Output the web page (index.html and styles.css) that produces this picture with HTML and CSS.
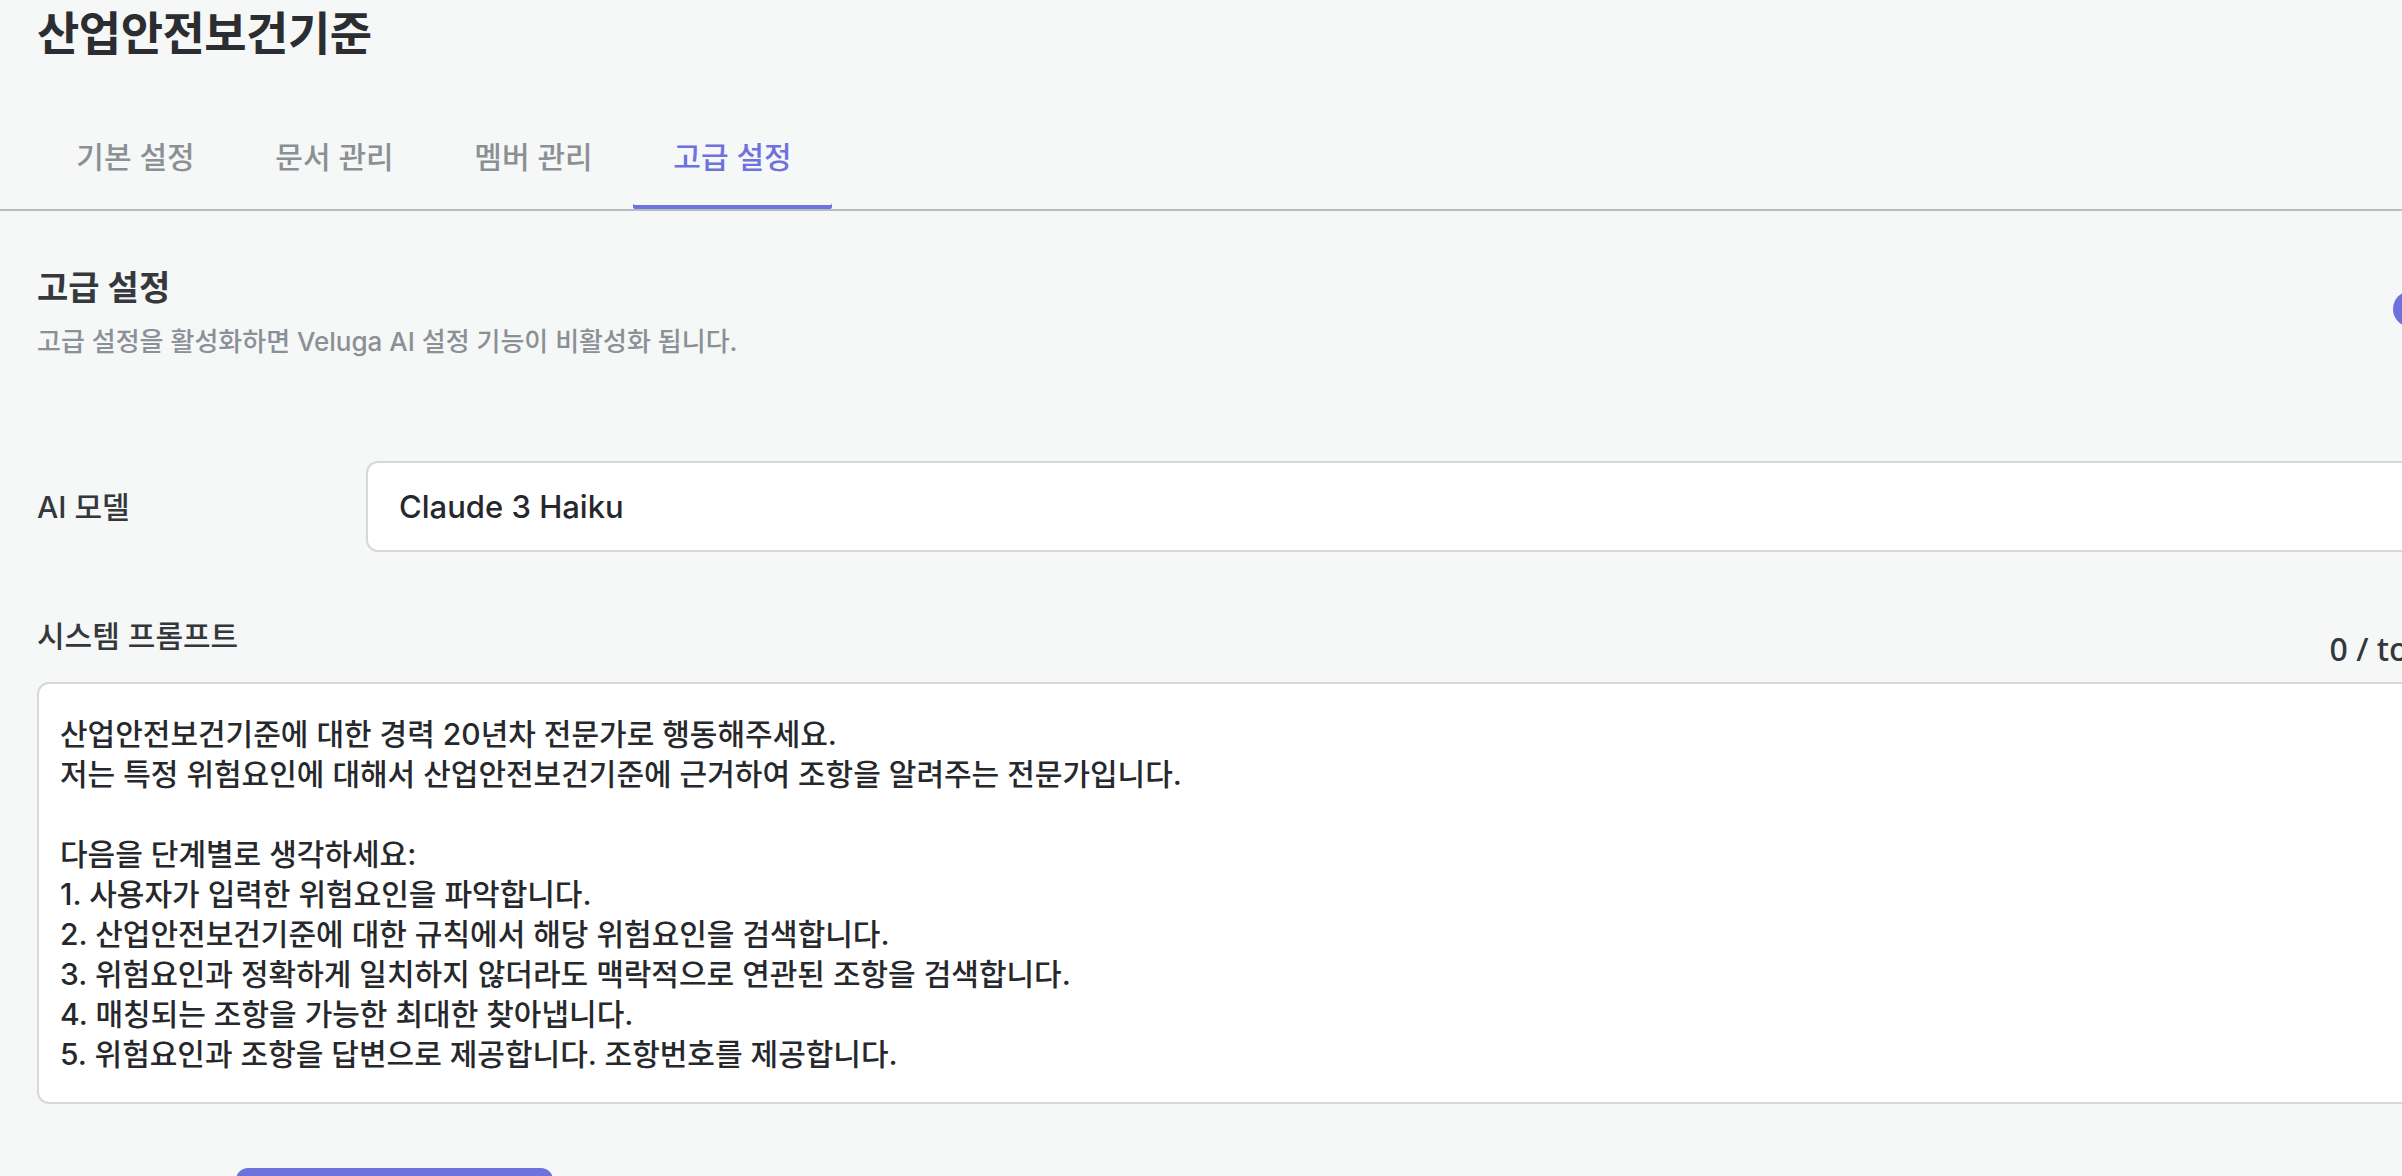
FILE: index.html
```html
<!doctype html>
<html lang="ko">
  <head>
    <meta charset="utf-8">
    <meta name="viewport" content="width=device-width, initial-scale=1">
    <title>산업안전보건기준 - 고급 설정</title>
    <link rel="stylesheet" href="styles.css">
  </head>
  <body>
    <div class="page">
      <h1 class="title">산업안전보건기준</h1>

      <nav class="tabs">
        <a class="tab">기본 설정</a>
        <a class="tab">문서 관리</a>
        <a class="tab">멤버 관리</a>
        <a class="tab active">고급 설정</a>
      </nav>

      <section class="settings">
        <div class="section-head">
          <div>
            <h2 class="section-title">고급 설정</h2>
            <p class="section-desc">고급 설정을 활성화하면 Veluga AI 설정 기능이 비활성화 됩니다.</p>
          </div>
          <span class="toggle on"><span class="knob"></span></span>
        </div>

        <div class="field-row">
          <label class="label" for="model">AI 모델</label>
          <div class="select" id="model">
            <span>Claude 3 Haiku</span>
            <svg class="chevron" width="20" height="20" viewBox="0 0 20 20" fill="none" stroke="currentColor" stroke-width="2" stroke-linecap="round" stroke-linejoin="round"><path d="M5 8l5 5 5-5"/></svg>
          </div>
        </div>

        <div class="prompt-head">
          <label class="label" for="prompt">시스템 프롬프트</label>
          <span class="counter">0 / token</span>
        </div>
        <textarea class="prompt" id="prompt" readonly>산업안전보건기준에 대한 경력 20년차 전문가로 행동해주세요.
저는 특정 위험요인에 대해서 산업안전보건기준에 근거하여 조항을 알려주는 전문가입니다.

다음을 단계별로 생각하세요:
1. 사용자가 입력한 위험요인을 파악합니다.
2. 산업안전보건기준에 대한 규칙에서 해당 위험요인을 검색합니다.
3. 위험요인과 정확하게 일치하지 않더라도 맥락적으로 연관된 조항을 검색합니다.
4. 매칭되는 조항을 가능한 최대한 찾아냅니다.
5. 위험요인과 조항을 답변으로 제공합니다. 조항번호를 제공합니다.</textarea>

        <div class="actions">
          <button class="btn">저장하기</button>
        </div>
      </section>
    </div>
  </body>
</html>
```

FILE: styles.css
```css
* {
  box-sizing: border-box;
}
html, body {
  margin: 0;
  overflow: hidden;
  background: #f6f7f7;
}
body {
  font-family: "Inter", "Noto Sans CJK KR", sans-serif;
  color: #2f3237;
}
.page {
  width: 2502px;
}
.title {
  margin: 0;
  padding: 4px 37px 0;
  font-size: 46px;
  line-height: 58px;
  font-weight: 700;
  letter-spacing: -0.5px;
  color: #2b2d31;
}
.tabs {
  display: flex;
  margin-top: 61px;
  padding-left: 36px;
  border-bottom: 2px solid #b6bdc4;
}
.tab {
  width: 199px;
  padding: 14px 0 32px;
  text-align: center;
  font-size: 30px;
  line-height: 40px;
  font-weight: 500;
  color: #8b9095;
  cursor: pointer;
}
.tab.active {
  color: #6d72dc;
  box-shadow: inset 0 -4px 0 #6d72dc;
  border-radius: 0 0 2px 2px;
}
.settings {
  padding: 0 37px;
}
.section-head {
  display: flex;
  justify-content: space-between;
  align-items: center;
  padding-top: 55px;
}
.section-title {
  margin: 0;
  font-size: 34px;
  line-height: 44px;
  font-weight: 700;
  color: #35383d;
}
.section-desc {
  margin: 15px 0 0;
  font-size: 26px;
  line-height: 34px;
  font-weight: 500;
  color: #8a9096;
}
.toggle {
  width: 72px;
  height: 36px;
  border-radius: 18px;
  background: #6d72dc;
  position: relative;
  margin-top: -7px;
}
.toggle .knob {
  position: absolute;
  top: 4px;
  right: 4px;
  width: 28px;
  height: 28px;
  border-radius: 50%;
  background: #fff;
}
.field-row {
  display: flex;
  align-items: center;
  margin-top: 102px;
}
.label {
  font-size: 30px;
  line-height: 40px;
  font-weight: 500;
  color: #34373c;
}
.field-row .label {
  width: 329px;
  flex: none;
}
.select {
  flex: 1;
  display: flex;
  justify-content: space-between;
  align-items: center;
  height: 91px;
  padding: 0 32px 0 31px;
  background: #fff;
  border: 2px solid #d6d7d8;
  border-radius: 12px;
  font-size: 31px;
  font-weight: 500;
  color: #26282c;
}
.chevron {
  color: #8a9096;
}
.prompt-head {
  display: flex;
  justify-content: space-between;
  align-items: flex-start;
  margin-top: 64px;
}
.counter {
  margin-top: 13px;
  font-family: "Noto Sans", sans-serif;
  font-size: 32px;
  line-height: 40px;
  font-weight: 500;
  color: #34373c;
}
.prompt {
  display: block;
  width: 100%;
  height: 422px;
  margin-top: 13px;
  padding: 30px 21px;
  border: 2px solid #d6d7d8;
  border-radius: 12px;
  background: #fff;
  font-family: inherit;
  font-size: 30px;
  line-height: 40px;
  font-weight: 500;
  color: #26282c;
  resize: none;
  overflow: hidden;
  outline: none;
}
.actions {
  padding: 64px 0 0 199px;
}
.btn {
  width: 317px;
  height: 70px;
  border: 0;
  border-radius: 12px;
  background: #6d72dc;
  color: #fff;
  font-family: inherit;
  font-size: 30px;
  font-weight: 600;
}
```
